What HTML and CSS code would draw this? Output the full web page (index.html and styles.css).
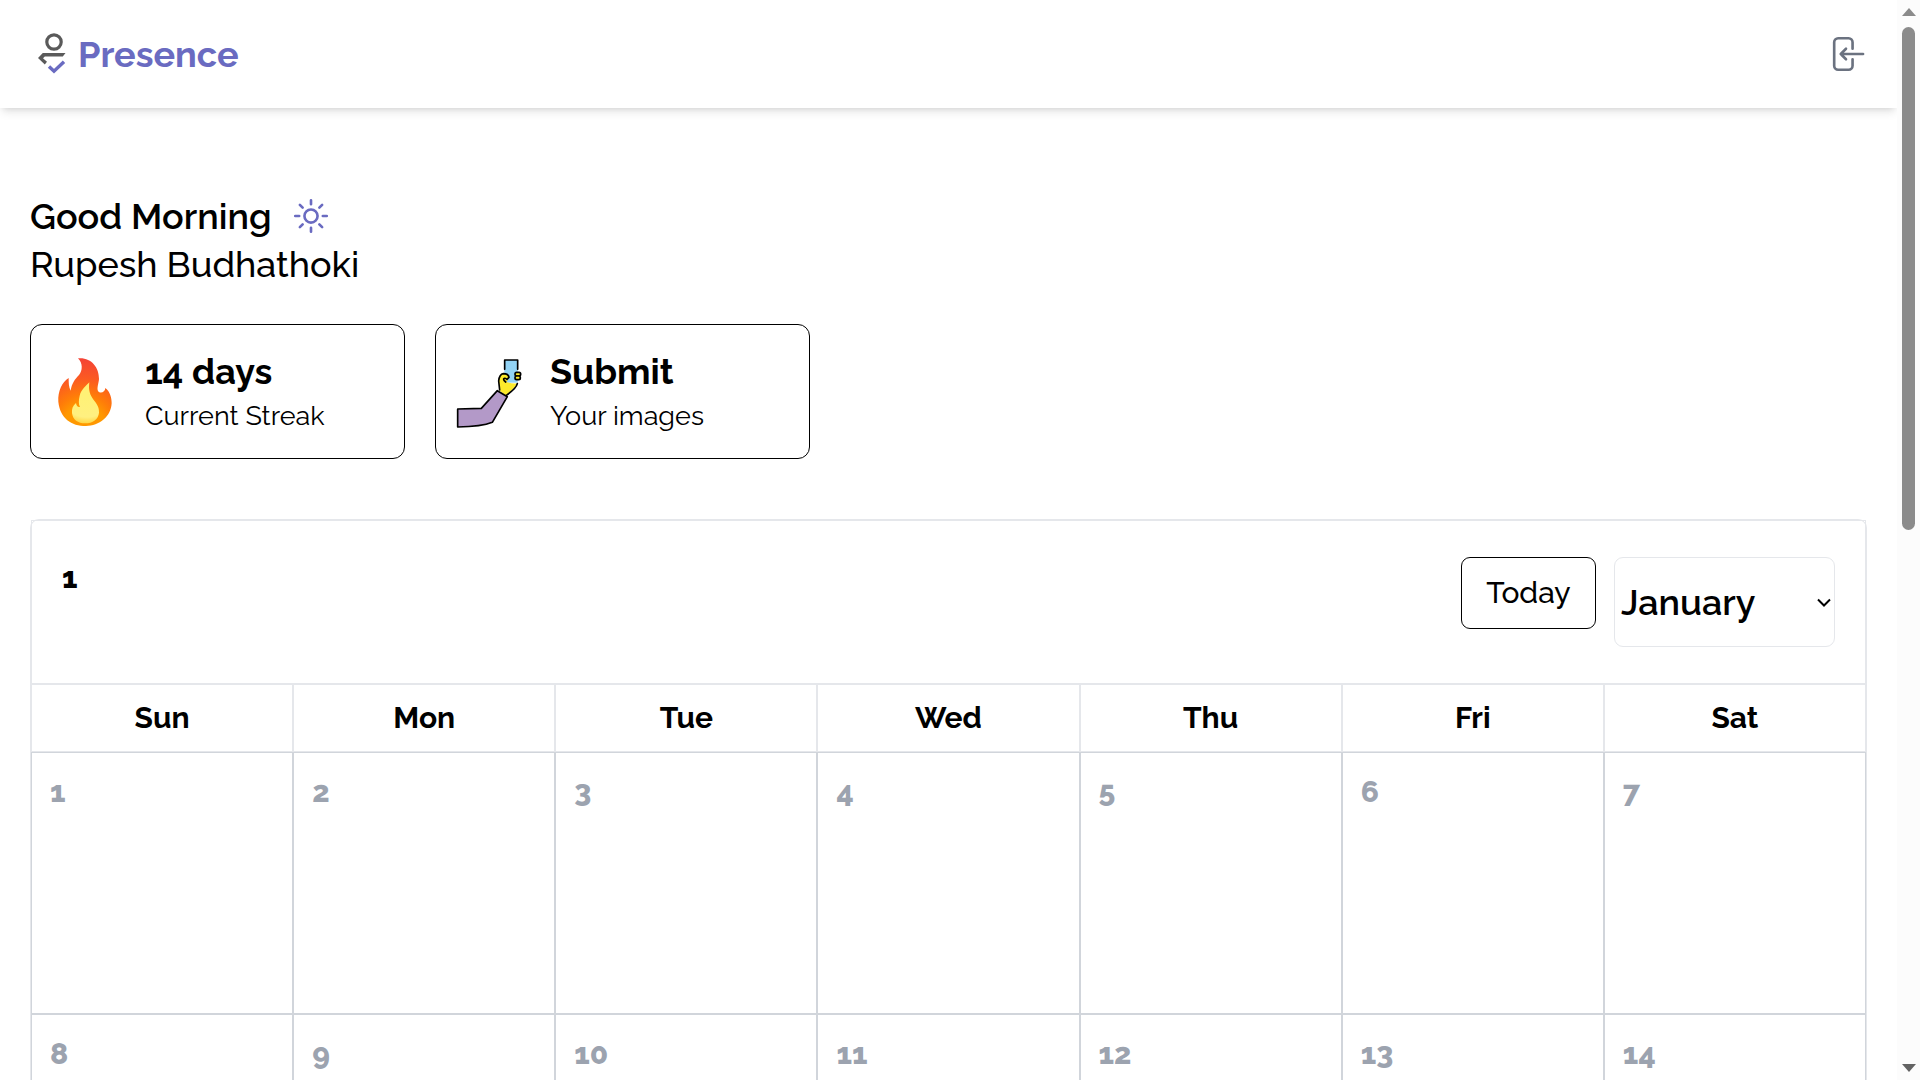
FILE: index.html
```html
<!DOCTYPE html>
<html lang="en">
<head>
<meta charset="utf-8">
<title>Presence</title>
<link rel="stylesheet" href="styles.css">
</head>
<body>
<div class="page">
  <header class="topbar">
    <a class="brand" href="#">
      <svg class="brand-mark" viewBox="0 0 28 42" aria-hidden="true">
        <circle cx="16" cy="9" r="7.2" fill="none" stroke="#5a5a5a" stroke-width="3.2"/>
        <path d="M4.8 20H27.5L24.8 23.6H6.8L5 25.2L9 28.8L6.8 31.4L0 25Z" fill="#5a5a5a"/>
        <path d="M11 33.5L16 38.2L26 28.8" fill="none" stroke="#6a6bc1" stroke-width="3.4"/>
      </svg>
      <span>Presence</span>
    </a>
    <button class="logout" type="button" aria-label="Log out">
      <svg class="icon" viewBox="0 0 24 24"><path d="M15.75 9V5.25A2.25 2.25 0 0 0 13.5 3h-6a2.25 2.25 0 0 0-2.25 2.25v13.5A2.25 2.25 0 0 0 7.5 21h6a2.25 2.25 0 0 0 2.25-2.25V15M12 9l-3 3 3 3M9 12h12.75"/></svg>
    </button>
  </header>
  <main class="content">
    <section class="greeting">
      <h1 class="hello">Good Morning
        <svg class="icon sun" viewBox="0 0 24 24" aria-hidden="true"><path d="M12 3v2.25m6.364.386-1.591 1.591M21 12h-2.25m-.386 6.364-1.591-1.591M12 18.75V21m-4.773-4.227-1.591 1.591M5.25 12H3m4.227-4.773L5.636 5.636M15.75 12a3.75 3.75 0 1 1-7.5 0 3.75 3.75 0 0 1 7.5 0z"/></svg>
      </h1>
      <p class="name">Rupesh Budhathoki</p>
    </section>
    <section class="cards">
      <article class="card">
        <svg class="card-icon" viewBox="96 138 216 216" aria-hidden="true">
          <defs>
            <radialGradient id="flame" gradientUnits="userSpaceOnUse" cx="192" cy="345" r="200">
              <stop offset="0.3" stop-color="#ff9800"/><stop offset="0.45" stop-color="#ff7d08"/><stop offset="0.7" stop-color="#fb5a22"/><stop offset="1" stop-color="#f44336"/>
            </radialGradient>
            <radialGradient id="core" gradientUnits="userSpaceOnUse" cx="200" cy="235" r="115">
              <stop offset="0.2" stop-color="#fff176"/><stop offset="0.75" stop-color="#fff080"/><stop offset="1" stop-color="#ffc928"/>
            </radialGradient>
          </defs>
          <path fill="url(#flame)" d="M174 145C212 141 238 171 237 207C236 220 230 234 234 243C241 252 255 247 256 234C271 246 275 264 275 280C273 320 238 348 198 348C154 348 120 325 115 275C113 244 126 216 146 204C146 218 146 231 152 242C155 221 165 207 177 195C188 182 189 160 174 145Z"/>
          <path fill="url(#core)" d="M208 217C199 227 184 238 179 257C176 271 175 282 180 291C172 292 169 286 168 279C158 287 155 298 156 309C158 329 174 340 195 340C219 340 235 328 237 308C238 287 226 278 217 264C207 249 206 234 208 217Z"/>
        </svg>
        <div>
          <h2 class="card-title">14 days</h2>
          <p class="card-text">Current Streak</p>
        </div>
      </article>
      <article class="card">
        <svg class="card-icon" viewBox="111 138 216 216" aria-hidden="true">
          <g stroke="#000" stroke-width="5" stroke-linejoin="round" stroke-linecap="round">
            <path fill="#92d3f5" stroke="none" d="M253 150H293V218H253Z"/>
            <path fill="#fcea2b" stroke="none" d="M239 242L236 213Q238 193 250 191Q266 190 267 205L259 216Q275 222 292 220Q286 232 258 257Z"/>
            <path fill="none" d="M254 178V150H293V178M239 240L236 213Q238 193 250 191Q265 191 267 202L261 208Q254 202 251 207Q250 211 257 216M292 221Q289 235 259 256"/>
            <rect fill="#fcea2b" x="285" y="187" width="17" height="11" rx="5"/>
            <rect fill="#fcea2b" x="285" y="198" width="16" height="11" rx="5"/>
            <path fill="#b399c8" d="M113 297L184 295L232 242L262 260L217 337Q185 350 113 351Z"/>
          </g>
        </svg>
        <div>
          <h2 class="card-title">Submit</h2>
          <p class="card-text">Your images</p>
        </div>
      </article>
    </section>
    <section class="calendar">
      <div class="toolbar">
        <h2 class="current">1</h2>
        <div class="controls">
          <button class="today" type="button">Today</button>
          <div class="month-field">
            <select class="month" aria-label="Month">
              <option>January</option><option>February</option><option>March</option><option>April</option><option>May</option><option>June</option><option>July</option><option>August</option><option>September</option><option>October</option><option>November</option><option>December</option>
            </select>
            <svg class="chevron" viewBox="0 0 14 9" aria-hidden="true"><path d="M1 1.5L7 7.5L13 1.5"/></svg>
          </div>
        </div>
      </div>
      <table class="days">
        <thead><tr><th>Sun</th><th>Mon</th><th>Tue</th><th>Wed</th><th>Thu</th><th>Fri</th><th>Sat</th></tr></thead>
        <tbody>
          <tr><td>1</td><td>2</td><td>3</td><td>4</td><td>5</td><td>6</td><td>7</td></tr>
          <tr><td>8</td><td>9</td><td>10</td><td>11</td><td>12</td><td>13</td><td>14</td></tr>
        </tbody>
      </table>
    </section>
  </main>
</div>
<div class="scrollbar" aria-hidden="true">
  <span class="arrow-up"></span>
  <span class="track"><span class="thumb"></span></span>
  <span class="arrow-down"></span>
</div>
</body>
</html>
```
FILE: styles.css
```css
* { box-sizing: border-box; }
body {
  margin: 0;
  display: flex;
  height: 100vh;
  overflow: hidden;
  background: #fff;
  color: #000;
  font-family: Raleway, Lato, "Open Sans", sans-serif;
}
h1, h2, p { margin: 0; }
button, select { font: inherit; color: inherit; background: #fff; }
.page { flex: 1; min-width: 0; height: 100%; overflow: hidden; }
.topbar {
  display: flex;
  align-items: center;
  justify-content: space-between;
  height: 108px;
  padding: 0 30px 0 38px;
  box-shadow: 0 6px 9px -2px rgba(0, 0, 0, 0.1), 0 3px 6px -3px rgba(0, 0, 0, 0.1);
}
.brand {
  display: flex;
  align-items: center;
  gap: 12px;
  color: #6a6bc1;
  font-size: 36px;
  font-weight: 700;
  line-height: 48px;
  text-decoration: none;
}
.brand-mark { width: 28px; height: 42px; }
.logout { display: flex; padding: 0; border: 0; color: #6b7280; }
.icon {
  width: 42px;
  height: 42px;
  fill: none;
  stroke: currentColor;
  stroke-width: 1.5;
  stroke-linecap: round;
  stroke-linejoin: round;
}
.content { padding: 84px 30px 0; }
.greeting { font-size: 36px; line-height: 48px; }
.hello { display: flex; align-items: center; gap: 18px; font-size: inherit; font-weight: 600; }
.name { font-weight: 500; }
.sun { color: #6a6bc1; }
.cards { display: flex; gap: 30px; margin-top: 36px; }
.card {
  display: flex;
  align-items: center;
  gap: 21px;
  width: 375px;
  height: 135px;
  padding: 0 21px;
  border: 1px solid #000;
  border-radius: 12px;
}
.card-icon { width: 72px; height: 72px; overflow: visible; }
.card-title { font-size: 36px; font-weight: 700; line-height: 48px; }
.card-text { font-size: 27px; line-height: 42px; }
.calendar { margin-top: 60px; border: 1px solid #e5e7eb; border-radius: 9px 9px 0 0; }
.toolbar {
  display: flex;
  justify-content: space-between;
  padding: 36px 30px;
  border: 1px solid #e5e7eb;
}
.current { font-size: 30px; font-weight: 800; line-height: 42px; }
.controls { display: flex; align-items: flex-start; gap: 18px; }
.today {
  width: 135px;
  height: 72px;
  padding: 0 0 2px;
  border: 1px solid #000;
  border-radius: 9px;
  font-size: 30px;
  font-weight: 500;
}
.month-field { display: grid; align-items: center; }
.month-field > * { grid-area: 1 / 1; }
.month {
  appearance: none;
  width: 221px;
  height: 90px;
  padding: 0 24px 0 6px;
  border: 1px solid #e5e7eb;
  border-radius: 9px;
  font-size: 36px;
  font-weight: 600;
}
.chevron {
  justify-self: end;
  width: 14px;
  height: 9px;
  margin-right: 4px;
  fill: none;
  stroke: #000;
  stroke-width: 2;
  pointer-events: none;
}
.days { width: 100%; table-layout: fixed; border-spacing: 0; }
.days th { height: 68px; padding: 0 0 2px; border: 1px solid #e5e7eb; font-size: 30px; font-weight: 700; }
.days td {
  height: 262px;
  padding: 21px 18px;
  border: 1px solid #d1d5db;
  color: #9ca3af;
  font-size: 30px;
  font-weight: 800;
  line-height: 36px;
  vertical-align: top;
}
.scrollbar {
  display: flex;
  flex-direction: column;
  align-items: center;
  gap: 11px;
  width: 23px;
  padding: 8px 0;
  background: #fcfcfc;
}
.arrow-up, .arrow-down { border: solid transparent; border-width: 0 7px; }
.arrow-up { border-bottom: 8px solid #8b8b8b; }
.arrow-down { border-top: 8px solid #636363; }
.track { flex: 1; width: 13px; }
.thumb { display: block; height: 49%; border-radius: 7px; background: #8b8b8b; }
```
